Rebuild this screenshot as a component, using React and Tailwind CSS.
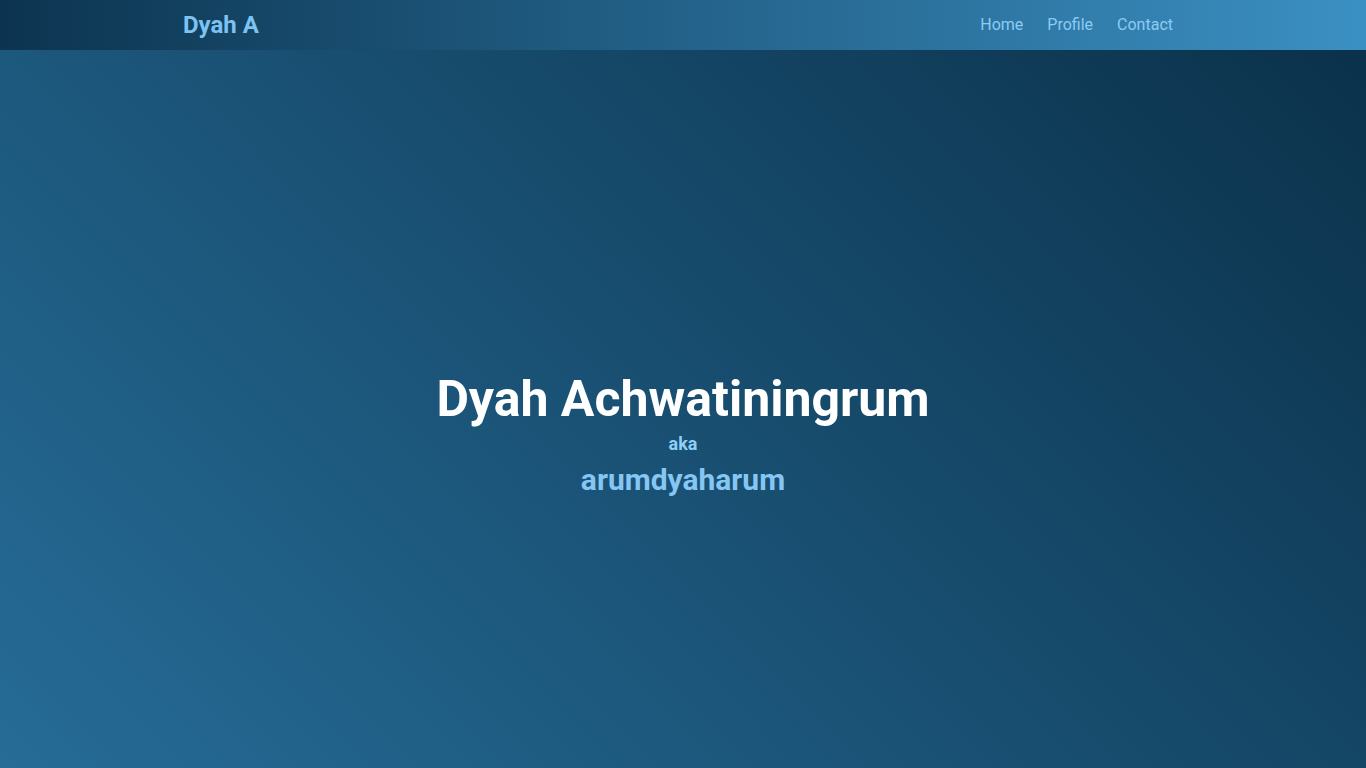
export default function App() {
  const links = ['Home', 'Profile', 'Contact'];

  return (
    <div className="min-h-screen font-['Roboto',sans-serif] bg-[linear-gradient(45deg,#266c97,#0a3049)]">
      {/* Top nav */}
      <nav className="h-[50px] bg-[linear-gradient(90deg,#0c3450,#3b90c3)]">
        <div className="mx-auto flex h-full w-[1000px] items-center justify-between">
          <a className="text-2xl font-bold text-[#7cc2f2]">Dyah A</a>
          <ul className="flex items-center gap-6 pr-2.5">
            {links.map((l) => (
              <li key={l} className="text-base text-[#8cccf4]">{l}</li>
            ))}
          </ul>
        </div>
      </nav>

      {/* Hero */}
      <main className="flex h-[718px] flex-col items-center justify-center pt-[49px] text-center">
        <h1 className="text-[50px] font-bold leading-[1.2] text-white">Dyah Achwatiningrum</h1>
        <p className="mt-1 text-lg font-bold leading-[1.2] text-[#8ccff8]">aka</p>
        <h2 className="mt-2 text-3xl font-bold leading-[1.2] text-[#86c6f2]">arumdyaharum</h2>
      </main>
    </div>
  );
}
